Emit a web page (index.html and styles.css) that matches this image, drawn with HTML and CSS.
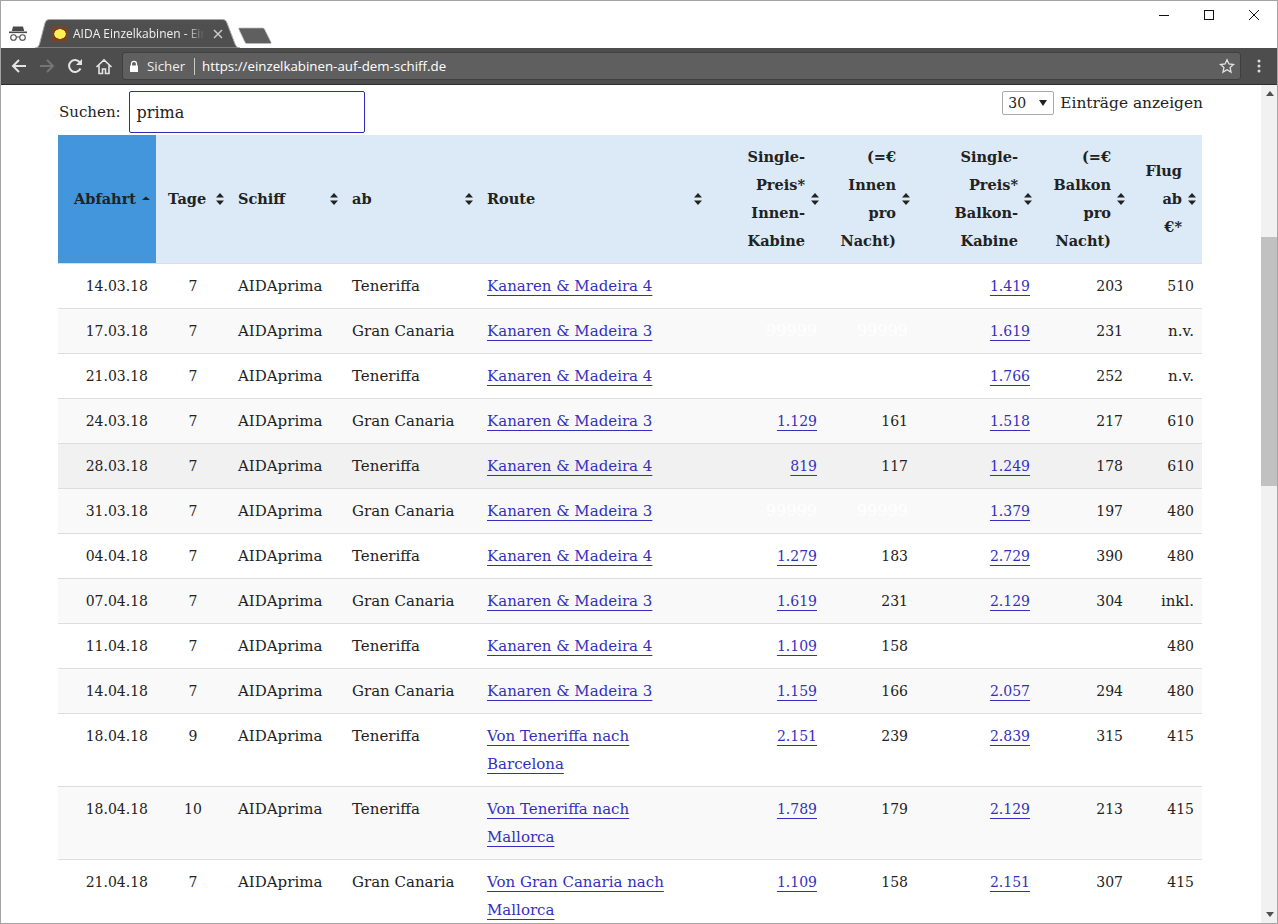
FILE: index.html
```html
<!DOCTYPE html>
<html lang="de">
<head>
<meta charset="utf-8">
<title>AIDA Einzelkabinen</title>
<link rel="stylesheet" href="styles.css">
</head>
<body>
<div class="window">
  <header class="tabstrip">
    <svg class="incognito" width="20" height="18" viewBox="0 0 20 18"><path d="M5 1.500h10l1.200 4.500H3.800z" fill="#4a4a4a"/><rect x="1" y="6.500" width="18" height="1.600" fill="#4a4a4a"/><circle cx="5.500" cy="12.500" r="2.800" fill="none" stroke="#4a4a4a" stroke-width="1.100"/><circle cx="14.500" cy="12.500" r="2.800" fill="none" stroke="#4a4a4a" stroke-width="1.100"/><path d="M8.300 12h3.400" stroke="#4a4a4a"/></svg>
    <div class="tab">
      <svg class="tab-bg" width="208" height="29" viewBox="0 0 208 29"><path d="M0 29C3 29 3.500 27 4.500 25L10 4C11 1.500 12 .5 15 .5H187C190 .5 191 1.500 192 4L200 25C201 27 202 29 205 29Z" fill="#4f4f4f" stroke="#a8a8a8"/></svg>
      <span class="favicon"></span>
      <span class="tab-title">AIDA Einzelkabinen - Einzel</span>
      <svg class="tab-close" width="10" height="10" viewBox="0 0 10 10"><path d="M1 1l8 8M9 1l-8 8" stroke="#c8c8c8" stroke-width="1.500"/></svg>
    </div>
    <svg class="newtab" width="34" height="17" viewBox="0 0 34 17"><path d="M1.500 1h23c1 0 1.500.4 2 1.200l6.500 13c.3.800 0 1.300-1 1.300H9c-1 0-1.500-.4-2-1.200L1 2.500C.6 1.500.7 1 1.500 1z" fill="#5f5f5f" stroke="#bbb" stroke-width=".7"/></svg>
    <div class="winctl">
      <svg width="12" height="12" viewBox="0 0 12 12"><path d="M1 6.500h10" stroke="#111"/></svg>
      <svg width="12" height="12" viewBox="0 0 12 12"><rect x="1.500" y="1.500" width="9" height="9" fill="none" stroke="#111"/></svg>
      <svg width="12" height="12" viewBox="0 0 12 12"><path d="M1 1l10 10M11 1L1 11" stroke="#111"/></svg>
    </div>
  </header>
  <nav class="toolbar">
    <svg class="tool" width="16" height="16" viewBox="0 0 16 16"><path d="M15 8H2M8 2L2 8l6 6" fill="none" stroke="#e4e4e4" stroke-width="2"/></svg>
    <svg class="tool" width="16" height="16" viewBox="0 0 16 16"><path d="M1 8h13M8 2l6 6-6 6" fill="none" stroke="#757575" stroke-width="2"/></svg>
    <svg class="tool" width="16" height="16" viewBox="0 0 16 16"><path d="M13.500 10.500A6 6 0 1 1 13 4.500" fill="none" stroke="#e4e4e4" stroke-width="2"/><path d="M15 1v6H9z" fill="#e4e4e4"/></svg>
    <svg class="tool" width="18" height="17" viewBox="0 0 18 17"><path d="M1.500 9L9 1.800 16.500 9M4 7.500V15.500h3.500V11h3v4.500H14V7.500" fill="none" stroke="#e4e4e4" stroke-width="1.600"/></svg>
    <div class="omnibox">
      <svg class="lock" width="10" height="13" viewBox="0 0 10 13"><path d="M2.500 6V3.800a2.500 2.500 0 0 1 5 0V6" fill="none" stroke="#fff" stroke-width="1.300"/><rect x="1" y="5.500" width="8" height="6.500" rx=".5" fill="#fff"/></svg>
      <span class="secure">Sicher</span>
      <span class="url">https://einzelkabinen-auf-dem-schiff.de</span>
      <svg class="star" width="16" height="16" viewBox="0 0 16 16"><path d="M8 1.800l1.900 4.200 4.600.5-3.400 3.100.9 4.500-4-2.300-4 2.300.9-4.500L1.500 6.500 6.100 6z" fill="none" stroke="#e4e4e4" stroke-width="1.300"/></svg>
    </div>
    <svg class="menu" width="4" height="14" viewBox="0 0 4 14"><circle cx="2" cy="2" r="1.500" fill="#ddd"/><circle cx="2" cy="7" r="1.500" fill="#ddd"/><circle cx="2" cy="12" r="1.500" fill="#ddd"/></svg>
  </nav>
  <div class="viewport">
    <main class="page">
      <div class="controls">
        <label class="search">Suchen: <span class="search-input">prima</span></label>
        <div class="length"><span class="select">30<i class="select-arrow"></i></span> Einträge anzeigen</div>
      </div>
      <table class="cabins">
        <colgroup><col class="c1"><col class="c2"><col class="c3"><col class="c4"><col class="c5"><col class="c6"><col class="c7"><col class="c8"><col class="c9"><col class="c10"></colgroup>
        <thead>
          <tr>
            <th class="sorted"><div class="th right">Abfahrt<svg class="sort" width="8" height="12" viewBox="0 0 8 12"><path d="M4 3.500l4 3.500H0z"/></svg></div></th>
            <th class="p12"><div class="th">Tage<svg class="sort" width="8" height="12" viewBox="0 0 8 12"><path d="M4 0l4 4.500H0zM4 12L0 7.500h8z"/></svg></div></th>
            <th><div class="th">Schiff<svg class="sort" width="8" height="12" viewBox="0 0 8 12"><path d="M4 0l4 4.500H0zM4 12L0 7.500h8z"/></svg></div></th>
            <th><div class="th">ab<svg class="sort" width="8" height="12" viewBox="0 0 8 12"><path d="M4 0l4 4.500H0zM4 12L0 7.500h8z"/></svg></div></th>
            <th class="pr10"><div class="th">Route<svg class="sort" width="8" height="12" viewBox="0 0 8 12"><path d="M4 0l4 4.500H0zM4 12L0 7.500h8z"/></svg></div></th>
            <th class="pr14"><div class="th right"><span class="multi">Single-<br>Preis*<br>Innen-<br>Kabine</span><svg class="sort" width="8" height="12" viewBox="0 0 8 12"><path d="M4 0l4 4.500H0zM4 12L0 7.500h8z"/></svg></div></th>
            <th class="pr14"><div class="th right"><span class="multi">(=€<br>Innen<br>pro<br>Nacht)</span><svg class="sort" width="8" height="12" viewBox="0 0 8 12"><path d="M4 0l4 4.500H0zM4 12L0 7.500h8z"/></svg></div></th>
            <th class="pr14"><div class="th right"><span class="multi">Single-<br>Preis*<br>Balkon-<br>Kabine</span><svg class="sort" width="8" height="12" viewBox="0 0 8 12"><path d="M4 0l4 4.500H0zM4 12L0 7.500h8z"/></svg></div></th>
            <th class="pr14"><div class="th right"><span class="multi">(=€<br>Balkon<br>pro<br>Nacht)</span><svg class="sort" width="8" height="12" viewBox="0 0 8 12"><path d="M4 0l4 4.500H0zM4 12L0 7.500h8z"/></svg></div></th>
            <th class="pr6"><div class="th right"><span class="multi">Flug<br>ab<br>€*</span><svg class="sort" width="8" height="12" viewBox="0 0 8 12"><path d="M4 0l4 4.500H0zM4 12L0 7.500h8z"/></svg></div></th>
          </tr>
        </thead>
        <tbody>
          <tr><td class="date">14.03.18</td><td class="days">7</td><td>AIDAprima</td><td>Teneriffa</td><td><a href="#">Kanaren &amp; Madeira 4</a></td><td class="num"><span class="hidden">99999</span></td><td class="num"><span class="hidden">99999</span></td><td class="num"><a href="#">1.419</a></td><td class="num">203</td><td class="flug">510</td></tr>
          <tr><td class="date">17.03.18</td><td class="days">7</td><td>AIDAprima</td><td>Gran Canaria</td><td><a href="#">Kanaren &amp; Madeira 3</a></td><td class="num"><span class="hidden">99999</span></td><td class="num"><span class="hidden">99999</span></td><td class="num"><a href="#">1.619</a></td><td class="num">231</td><td class="flug word">n.v.</td></tr>
          <tr><td class="date">21.03.18</td><td class="days">7</td><td>AIDAprima</td><td>Teneriffa</td><td><a href="#">Kanaren &amp; Madeira 4</a></td><td class="num"><span class="hidden">99999</span></td><td class="num"><span class="hidden">99999</span></td><td class="num"><a href="#">1.766</a></td><td class="num">252</td><td class="flug word">n.v.</td></tr>
          <tr><td class="date">24.03.18</td><td class="days">7</td><td>AIDAprima</td><td>Gran Canaria</td><td><a href="#">Kanaren &amp; Madeira 3</a></td><td class="num"><a href="#">1.129</a></td><td class="num">161</td><td class="num"><a href="#">1.518</a></td><td class="num">217</td><td class="flug">610</td></tr>
          <tr class="hover"><td class="date">28.03.18</td><td class="days">7</td><td>AIDAprima</td><td>Teneriffa</td><td><a href="#">Kanaren &amp; Madeira 4</a></td><td class="num"><a href="#">819</a></td><td class="num">117</td><td class="num"><a href="#">1.249</a></td><td class="num">178</td><td class="flug">610</td></tr>
          <tr><td class="date">31.03.18</td><td class="days">7</td><td>AIDAprima</td><td>Gran Canaria</td><td><a href="#">Kanaren &amp; Madeira 3</a></td><td class="num"><span class="hidden">99999</span></td><td class="num"><span class="hidden">99999</span></td><td class="num"><a href="#">1.379</a></td><td class="num">197</td><td class="flug">480</td></tr>
          <tr><td class="date">04.04.18</td><td class="days">7</td><td>AIDAprima</td><td>Teneriffa</td><td><a href="#">Kanaren &amp; Madeira 4</a></td><td class="num"><a href="#">1.279</a></td><td class="num">183</td><td class="num"><a href="#">2.729</a></td><td class="num">390</td><td class="flug">480</td></tr>
          <tr><td class="date">07.04.18</td><td class="days">7</td><td>AIDAprima</td><td>Gran Canaria</td><td><a href="#">Kanaren &amp; Madeira 3</a></td><td class="num"><a href="#">1.619</a></td><td class="num">231</td><td class="num"><a href="#">2.129</a></td><td class="num">304</td><td class="flug word">inkl.</td></tr>
          <tr><td class="date">11.04.18</td><td class="days">7</td><td>AIDAprima</td><td>Teneriffa</td><td><a href="#">Kanaren &amp; Madeira 4</a></td><td class="num"><a href="#">1.109</a></td><td class="num">158</td><td class="num"><span class="hidden">99999</span></td><td class="num"><span class="hidden">99999</span></td><td class="flug">480</td></tr>
          <tr><td class="date">14.04.18</td><td class="days">7</td><td>AIDAprima</td><td>Gran Canaria</td><td><a href="#">Kanaren &amp; Madeira 3</a></td><td class="num"><a href="#">1.159</a></td><td class="num">166</td><td class="num"><a href="#">2.057</a></td><td class="num">294</td><td class="flug">480</td></tr>
          <tr><td class="date">18.04.18</td><td class="days">9</td><td>AIDAprima</td><td>Teneriffa</td><td><a href="#">Von Teneriffa nach<br>Barcelona</a></td><td class="num"><a href="#">2.151</a></td><td class="num">239</td><td class="num"><a href="#">2.839</a></td><td class="num">315</td><td class="flug">415</td></tr>
          <tr><td class="date">18.04.18</td><td class="days">10</td><td>AIDAprima</td><td>Teneriffa</td><td><a href="#">Von Teneriffa nach<br>Mallorca</a></td><td class="num"><a href="#">1.789</a></td><td class="num">179</td><td class="num"><a href="#">2.129</a></td><td class="num">213</td><td class="flug">415</td></tr>
          <tr><td class="date">21.04.18</td><td class="days">7</td><td>AIDAprima</td><td>Gran Canaria</td><td><a href="#">Von Gran Canaria nach<br>Mallorca</a></td><td class="num"><a href="#">1.109</a></td><td class="num">158</td><td class="num"><a href="#">2.151</a></td><td class="num">307</td><td class="flug">415</td></tr>
        </tbody>
      </table>
    </main>
    <aside class="scrollbar">
      <i class="sb-up"></i>
      <div class="sb-track"><div class="sb-thumb"></div></div>
      <i class="sb-down"></i>
    </aside>
  </div>
</div>
</body>
</html>
```
FILE: styles.css
```css
* { box-sizing: border-box; }
html, body { margin: 0; height: 100%; overflow: hidden; background: #fff; }
.window {
  width: 1278px; height: 924px; border: 1px solid #a3a3a3;
  display: flex; flex-direction: column; overflow: hidden;
  font-family: "Open Sans", "Noto Sans", sans-serif;
}
.tabstrip { height: 47px; flex: none; display: flex; align-items: flex-end; background: #fff; position: relative; }
.incognito { margin: 0 0 5px 7px; flex: none; }
.tab {
  position: relative; width: 207px; height: 29px; margin-left: 7px; flex: none;
  display: flex; align-items: center; padding: 0 0 0 17px;
  font-size: 12px; color: #f0f0f0;
}
.tab-bg { position: absolute; left: 0; top: 0; }
.favicon {
  position: relative; width: 16px; height: 16px; margin-right: 5px; flex: none;
  background: radial-gradient(ellipse 6px 5px at center, #ffef50 90%, #74452c 100%);
}
.tab-title { position: relative; width: 132px; overflow: hidden; white-space: nowrap; -webkit-mask-image: linear-gradient(90deg, #000 85%, transparent); mask-image: linear-gradient(90deg, #000 85%, transparent); }
.tab-close { position: relative; margin-left: 8px; }
.newtab { margin: 0 0 4px -4px; flex: none; }
.winctl { margin: 0 17px auto auto; padding-top: 8px; display: flex; gap: 33px; }
.toolbar {
  height: 37px; flex: none; background: #4d4d4d; border-bottom: 1px solid #2e2e2e;
  display: flex; align-items: center; padding: 0 0 0 10px;
}
.tool { margin-right: 12px; flex: none; }
.omnibox {
  width: 1119px; height: 28px; margin-left: -3px; flex: none;
  background: #5f5f5f; border: 1px solid #3f3f3f; border-radius: 3px;
  display: flex; align-items: center; padding-left: 6px;
  font-size: 13.3px; color: #eee;
}
.lock { flex: none; }
.secure { margin-left: 8px; padding-right: 9px; border-right: 1px solid #c9c9c9; line-height: 17px; }
.url { margin-left: 7px; color: #fff; }
.star { margin-left: auto; margin-right: 5px; }
.menu { margin-left: 16px; flex: none; }
.viewport { flex: 1; min-height: 0; display: flex; }
.page {
  width: 1260px; flex: none; overflow: hidden; padding: 6px 0 0 57px;
  font-family: "DejaVu Serif", "Liberation Serif", serif; font-size: 15px; color: #222;
}
.controls { width: 1145px; height: 44px; display: flex; justify-content: space-between; align-items: flex-start; }
.search { display: flex; align-items: center; gap: 8px; padding-left: 1px; font-size: 15px; }
.search-input {
  width: 236px; height: 42px; border: 1px solid #2b2bb5; border-radius: 2px;
  display: flex; align-items: center; padding-left: 7px; font-size: 16px; color: #222;
}
.length { display: flex; align-items: center; gap: 6px; height: 24px; font-size: 15.400px; }
.select {
  position: relative; width: 52px; height: 24px; border: 1px solid #a9a9a9; border-radius: 2px;
  display: flex; align-items: center; padding-left: 5px; font-size: 14px;
}
.select-arrow { position: absolute; right: 6px; top: 8px; border: 4px solid transparent; border-top: 6px solid #222; border-bottom: 0; }
.cabins { width: 1144px; table-layout: fixed; border-collapse: collapse; }
.c1 { width: 98px; } .c2 { width: 74px; } .c3 { width: 114px; } .c4 { width: 135px; } .c5 { width: 233px; }
.c6 { width: 121px; } .c7 { width: 91px; } .c8 { width: 122px; } .c9 { width: 93px; } .c10 { width: 63px; }
thead th {
  background: #dbeaf6; height: 128px; padding: 8px 6px 8px 8px; font-size: 14.500px; font-weight: 700; text-align: left;
  line-height: 28px; border-bottom: 1px solid #ddd; vertical-align: middle; color: #222;
}
thead th.sorted { background: #4396db; }
thead th.p12 { padding-left: 12px; }
thead th.pr10 { padding-right: 10px; }
thead th.pr14 { padding-right: 14px; }
thead th.pr6 { padding-right: 6px; }
.th { display: flex; align-items: center; justify-content: space-between; }
.th.right { justify-content: flex-end; gap: 6px; }
.multi { display: block; text-align: right; }
.sort { fill: #222; flex: none; }
tbody td {
  padding: 8px; line-height: 28px; border-bottom: 1px solid #ddd; vertical-align: top; white-space: nowrap;
}
tbody tr:nth-child(even) { background: #f9f9f9; }
tbody tr.hover { background: #f1f1f1; }
tbody td.date { text-align: right; font-size: 14px; }
tbody td.days { text-align: center; font-size: 14px; }
tbody td.num { text-align: right; padding-right: 16px; font-size: 14px; }
tbody td.flug { text-align: right; font-size: 14px; }
tbody td.word { font-size: 15px; }
.hidden { color: #fff; font-size: 16px; }
a { color: #3330bd; text-decoration: underline; text-underline-offset: 4px; text-decoration-thickness: 1px; }
.scrollbar { width: 17px; flex: none; background: #f1f1f1; display: flex; flex-direction: column; align-items: center; }
.sb-up { flex: none; margin: 6px 0 5px; border: 4px solid transparent; border-bottom: 5px solid #505050; border-top: 0; }
.sb-track { flex: 1; width: 100%; padding-top: 136px; }
.sb-thumb { height: 249px; background: #c1c1c1; }
.sb-down { flex: none; margin: 5px 0 6px; border: 4px solid transparent; border-top: 5px solid #505050; border-bottom: 0; }
```
